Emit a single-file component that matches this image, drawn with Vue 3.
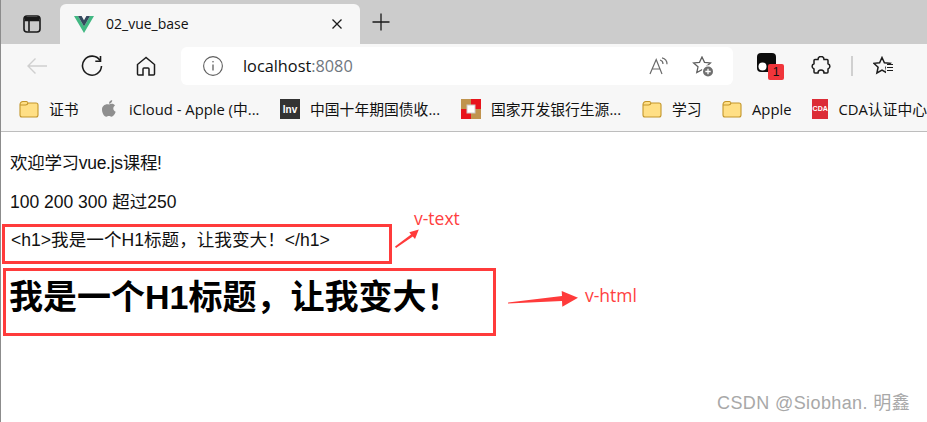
<script setup>
const bookmarks = [
  { icon: 'folder', label: '证书', w: 80 },
  { icon: 'apple', label: 'iCloud - Apple (中...', w: 181 },
  { icon: 'inv', label: '中国十年期国债收...', w: 181 },
  { icon: 'bank', label: '国家开发银行生源...', w: 181 },
  { icon: 'folder', label: '学习', w: 80 },
  { icon: 'folder', label: 'Apple', w: 90 },
  { icon: 'cda', label: 'CDA认证中心', w: 115 },
]
</script>

<template>
  <div class="window">
    <header class="tabstrip">
      <button class="tabs-btn" aria-label="tabs">
        <svg width="20" height="20" viewBox="0 0 20 20" fill="none" stroke="#1a1a1a" stroke-width="1.6">
          <rect x="2" y="2" width="16" height="16" rx="3" />
          <path d="M2.5 6.5h15M7 6.5V17.5" />
          <path d="M3 3h14v3H3z" fill="#1a1a1a" stroke="none" />
        </svg>
      </button>
      <div class="tab">
        <svg class="vue" width="20" height="17" viewBox="0 0 20 17">
          <path d="M0 0h4l6 10.5L16 0h4L10 17z" fill="#42b883" />
          <path d="M4 0h3.6L10 4.2 12.4 0H16l-6 10.5z" fill="#35495e" />
        </svg>
        <span class="tab-title">02_vue_base</span>
        <svg class="close" width="12" height="12" viewBox="0 0 12 12" stroke="#1a1a1a" stroke-width="1.3">
          <path d="M1.5 1.5l9 9M10.500 1.500l-9 9" />
        </svg>
      </div>
      <svg class="plus" width="18" height="18" viewBox="0 0 18 18" stroke="#1a1a1a" stroke-width="1.3">
        <path d="M9 .5v17M.5 9h17" />
      </svg>
    </header>

    <div class="toolbar">
      <svg class="nav back" width="22" height="18" viewBox="0 0 22 18" fill="none" stroke="#cfcfcf" stroke-width="1.4">
        <path d="M21 9H2M9.500 1.500L2 9l7.500 7.500" />
      </svg>
      <svg class="nav reload" width="22" height="22" viewBox="0 0 22 22" fill="none" stroke="#1c1c1c" stroke-width="1.6">
        <path d="M19 5.500A9.500 9.500 0 1 0 20.500 11" />
        <path d="M19.500 1v5.200h-5.200" />
      </svg>
      <svg class="nav home" width="20" height="20" viewBox="0 0 20 20" fill="none" stroke="#1c1c1c" stroke-width="1.5">
        <path d="M10 1.500L1.500 8.500V18a1 1 0 0 0 1 1h4.500v-6a1 1 0 0 1 1-1h4a1 1 0 0 1 1 1v6h4.500a1 1 0 0 0 1-1V8.500z" />
      </svg>
      <div class="address">
        <svg class="info" width="20" height="20" viewBox="0 0 20 20" fill="none" stroke="#5f5f5f" stroke-width="1.1">
          <circle cx="10" cy="10" r="9.400" />
          <path d="M10 8.500v6" stroke-width="1.300" />
          <circle cx="10" cy="5.800" r=".8" fill="#5f5f5f" stroke="none" />
        </svg>
        <span class="url">localhost<span class="port">:8080</span></span>
        <svg class="read" width="20" height="18" viewBox="0 0 20 18" fill="none" stroke="#6a6a6a" stroke-width="1.2">
          <path d="M1 17L7.200 2.500 13 17M3.200 12h8" />
          <path d="M11 3a4 4 0 0 1 3 4M13 .8a6.500 6.500 0 0 1 5 6.500" />
        </svg>
        <svg class="fav" width="22" height="21" viewBox="0 0 22 21" fill="none" stroke="#5f5f5f" stroke-width="1.3">
          <path d="M10 1l2.500 5.300 5.900.6-4.400 3.900 1.200 5.700L10 13.700l-5.200 2.800L6 10.800 1.600 6.900l5.900-.6z" />
          <circle cx="16" cy="15.500" r="6.200" fill="#fff" stroke="none" />
          <circle cx="16" cy="15.500" r="5" fill="#6f6f6f" stroke="none" />
          <path d="M16 12.800v5.400M13.300 15.500h5.400" stroke="#fff" stroke-width="1.300" />
        </svg>
      </div>
      <div class="ext">
        <svg width="20" height="20" viewBox="0 0 20 20">
          <rect width="19" height="19" rx="4" fill="#0c0c0c" />
          <circle cx="5.500" cy="13.500" r="4" fill="#fff" />
        </svg>
        <span class="badge">1</span>
      </div>
      <svg class="puzzle" width="20" height="20" viewBox="0 0 20 20" fill="none" stroke="#1c1c1c" stroke-width="1.5">
        <path d="M7 3.500a3 3 0 0 1 6 0h3a1 1 0 0 1 1 1v3.200a2.800 2.800 0 0 1 0 5.300V16a1 1 0 0 1-1 1h-3a3 3 0 0 0-6 0H4a1 1 0 0 1-1-1v-3a2.800 2.800 0 0 1 0-5.300V4.500a1 1 0 0 1 1-1z" />
      </svg>
      <span class="divider"></span>
      <svg class="favs" width="21" height="20" viewBox="0 0 21 20" fill="none" stroke="#1c1c1c" stroke-width="1.5">
        <path d="M9 1.500l2.400 5.200 5.800.6-4.300 3.900 1.200 5.800L9 14.100l-5.100 2.900 1.200-5.800L.8 7.300l5.800-.6z" />
        <rect x="13" y="8" width="8" height="11" fill="#f7f7f7" stroke="none" />
        <path d="M14 8.500h6M14 11.500h6M14 14.500h6" stroke-width="1.200" />
      </svg>
    </div>

    <nav class="bookmarks">
      <div v-for="b in bookmarks" :key="b.label" class="bookmark" :style="{ width: b.w + 'px' }">
        <svg v-if="b.icon === 'folder'" width="20" height="18" viewBox="0 0 20 18">
          <path d="M1 4.500a3 3 0 0 1 3-3h3.500a2 2 0 0 1 1.500 1.500h8a2 2 0 0 1 2 2V15a2 2 0 0 1-2 2H3a2 2 0 0 1-2-2z" fill="#ffdf85" stroke="#c4962a" stroke-width="1.100" />
          <path d="M1 5h5.500q2 0 2.500-2" fill="none" stroke="#c4962a" stroke-width="1.100" />
        </svg>
        <svg v-else-if="b.icon === 'apple'" width="20" height="20" viewBox="0 0 20 20">
          <path d="M10 5.500c1.500-1 4.800-1.500 6 1-2.600 1.700-2 5.300.7 6.200-1 2.600-2.600 5-4.300 5-1 0-1.300-.6-2.500-.6s-1.600.6-2.500.6C4.800 17.700 3 13.500 3 10.500c0-3.700 3.500-6 7-5zM10 4.800c-.2-2 1.300-3.600 3.200-3.800.2 2-1.300 3.700-3.200 3.800z" fill="#8f8f8f" />
        </svg>
        <span v-else-if="b.icon === 'inv'" class="fav-inv">Inv</span>
        <svg v-else-if="b.icon === 'bank'" width="20" height="20" viewBox="0 0 20 20">
          <rect width="20" height="20" fill="#c0934e" />
          <path d="M10 0h10v10H10zM0 10h10v10H0z" fill="#e8141c" />
          <rect x="6" y="6" width="8" height="8" fill="#fff" stroke="#ccc" />
        </svg>
        <span v-else class="fav-cda">CDA</span>
        <span class="bm-label">{{ b.label }}</span>
      </div>
    </nav>

    <main class="page">
      <p class="line first">欢迎学习vue.js课程!</p>
      <p class="line second">100 200 300 超过250</p>
      <div class="box text-box">&lt;h1&gt;我是一个H1标题，让我变大！&lt;/h1&gt;</div>
      <div class="box html-box"><h1>我是一个H1标题，让我变大！</h1></div>

      <svg class="arrow a1" width="27" height="22" viewBox="0 0 27 22">
        <path d="M2 18.500L18 6.500 16.300 4.300 25.800 1.500 22 11 19.800 8.500 3 20z" fill="#ff3b3b" />
      </svg>
      <span class="note n1">v-text</span>
      <svg class="arrow a2" width="72" height="20" viewBox="0 0 72 20">
        <path d="M1 14.500L55 8 54.700 3 71 9.700 55.300 18.700 55 13 1 15.500z" fill="#ff3b3b" />
      </svg>
      <span class="note n2">v-html</span>
      <span class="mark">CSDN @Siobhan. 明鑫</span>
    </main>
  </div>
</template>

<style scoped>
.window {
  width: 927px;
  height: 422px;
  overflow: hidden;
  position: relative;
  background: #fff;
  border-left: 1px solid #8c8c8c;
  box-sizing: border-box;
  font-family: "Liberation Sans", "Noto Sans CJK SC", sans-serif;
  color: #111;
}
.tabstrip {
  height: 44px;
  background: #cccccc;
  display: flex;
  align-items: flex-end;
}
.tabs-btn {
  width: 59px;
  height: 44px;
  padding: 4px 0 0 3px;
  border: 0;
  background: none;
  display: flex;
  align-items: center;
  justify-content: center;
}
.tab {
  width: 300px;
  height: 40px;
  background: #f7f7f7;
  border-radius: 6px 6px 0 0;
  display: flex;
  align-items: center;
  padding: 0 17px 0 14px;
  box-sizing: border-box;
}
.tab-title {
  margin-left: 12px;
  font: 14px/18px "Open Sans", sans-serif;
  flex: 1;
}
.plus {
  margin: 0 0 13px 12px;
}
.toolbar {
  height: 44px;
  background: #f7f7f7;
  display: flex;
  align-items: center;
  position: relative;
}
.nav {
  flex: none;
}
.back {
  margin-left: 25px;
}
.reload {
  margin-left: 33px;
}
.home {
  margin-left: 33px;
}
.address {
  width: 552px;
  height: 38px;
  margin-left: 25px;
  background: #fff;
  border-radius: 6px;
  display: flex;
  align-items: center;
  box-sizing: border-box;
  padding-left: 22px;
}
.url {
  margin-left: 20px;
  flex: 1;
  font: 16.300px/20px "Open Sans", sans-serif;
  color: #111;
}
.port {
  color: #6f7780;
}
.read {
  margin-right: 23px;
}
.fav {
  margin-right: 19px;
}
.ext {
  margin-left: 24px;
  width: 27px;
  height: 28px;
  position: relative;
  padding-top: 1px;
}
.badge {
  position: absolute;
  left: 11px;
  top: 12px;
  width: 16px;
  height: 16px;
  border-radius: 2px;
  background: #f0353b;
  font: 12px/16px "Liberation Sans", sans-serif;
  text-align: center;
  color: #111;
}
.puzzle {
  margin-left: 27px;
}
.divider {
  width: 2px;
  height: 20px;
  margin-left: 20px;
  background: #d0d0d0;
}
.favs {
  margin-left: 20px;
}
.bookmarks {
  height: 44px;
  background: #f7f7f7;
  border-bottom: 1px solid #bdbdbd;
  box-sizing: border-box;
  display: flex;
  align-items: center;
  padding: 0 0 2px 18px;
  white-space: nowrap;
}
.bookmark {
  display: flex;
  align-items: center;
  flex: none;
}
.bm-label {
  margin-left: 10px;
  font-size: 14.800px;
  line-height: 20px;
  font-family: "Open Sans", "Noto Sans CJK SC", sans-serif;
}
.fav-inv {
  width: 20px;
  height: 20px;
  background: #333;
  color: #fff;
  font: bold 10px/22px "Liberation Sans", sans-serif;
  text-align: center;
}
.fav-cda {
  width: 20px;
  height: 20px;
  background: #dc2c36;
  color: #fff;
  font: bold 7px/20px "Liberation Sans", sans-serif;
  text-align: center;
}
.page {
  display: flow-root;
  position: relative;
  height: 290px;
}
.line {
  margin: 0 0 0 9px;
  font-size: 17.500px;
  line-height: 24px;
}
.first {
  margin-top: 19px;
  letter-spacing: -.3px;
}
.second {
  margin-top: 15px;
}
.box {
  border: 3px solid #ff3b3b;
  box-sizing: border-box;
}
.text-box {
  width: 390px;
  height: 40px;
  margin: 10px 0 0 1px;
  padding: 1px 0 0 6px;
  font-size: 17.600px;
  line-height: 24px;
  white-space: nowrap;
}
.html-box {
  width: 493px;
  height: 68px;
  margin: 4px 0 0 2px;
  padding: 0 0 0 3px;
}
.html-box h1 {
  margin: 0;
  font-size: 34px;
  line-height: 52px;
  font-weight: 700;
  color: #000;
  white-space: nowrap;
}
.arrow {
  position: absolute;
}
.a1 {
  left: 392px;
  top: 96px;
}
.a2 {
  left: 506px;
  top: 156px;
}
.note {
  position: absolute;
  color: #ff4040;
  font: 17.500px/20px "Open Sans", sans-serif;
}
.n1 {
  left: 413px;
  top: 76px;
}
.n2 {
  left: 584px;
  top: 153px;
}
.mark {
  position: absolute;
  left: 716px;
  top: 259px;
  color: #a8a8a8;
  font-size: 18px;
  letter-spacing: .4px;
  line-height: 24px;
  font-family: "Liberation Sans", "Noto Sans CJK SC", sans-serif;
  white-space: nowrap;
}
</style>
